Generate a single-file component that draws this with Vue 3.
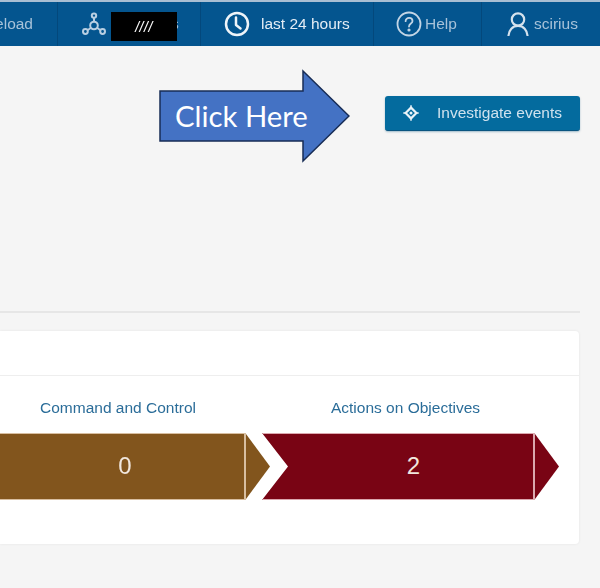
<script setup>
const bars = [
  { label: 'Command and Control', value: 0, kind: 'brown' },
  { label: 'Actions on Objectives', value: 2, kind: 'red' }
]
</script>

<template>
  <div class="page">
    <nav class="nav">
      <div class="cell c1"><span class="dim">Reload</span></div>
      <div class="cell c2">
        <svg class="ico-net" width="24" height="24" viewBox="0 0 24 24" fill="none" stroke="#b9cfe2" stroke-width="2">
          <circle cx="12" cy="3.600" r="2.200" />
          <circle cx="12" cy="13.500" r="3.800" />
          <circle cx="3.400" cy="19.500" r="2.400" />
          <circle cx="20.600" cy="19.500" r="2.400" />
          <path d="M12 5.800V9.700M9 15.800 5.500 18.200M15 15.800 18.500 18.200" />
        </svg>
        <span class="redacted">////</span><span class="dim tail">s</span>
      </div>
      <div class="cell c3">
        <svg width="26" height="26" viewBox="0 0 26 26" fill="none" stroke="#eef4f9" stroke-width="2.500">
          <circle cx="13" cy="13" r="11" />
          <path d="M12 6.500V14l4.500 3.500" stroke-linecap="round" stroke-linejoin="round" />
        </svg>
        <span class="bright">last 24 hours</span>
      </div>
      <div class="cell c4">
        <svg class="help" width="26" height="26" viewBox="0 0 26 26" fill="none" stroke="#c3d5e5" stroke-width="1.800">
          <circle cx="13" cy="13" r="11.500" />
          <path d="M9.600 10.200c0-2 1.500-3.300 3.500-3.300s3.400 1.200 3.400 3c0 2.600-3.500 2.600-3.500 5.600" stroke-linecap="round" />
          <circle cx="13" cy="19" r="0.700" fill="#c3d5e5" />
        </svg>
        <span class="dim">Help</span>
      </div>
      <div class="cell c5">
        <svg width="22" height="24" viewBox="0 0 22 24" fill="none" stroke="#d5e2ed" stroke-width="2.200">
          <circle cx="11" cy="7.500" r="6.200" />
          <path d="M1.500 23.500c.4-5.500 4-9.600 9.500-9.600s9.100 4.100 9.500 9.600" stroke-linecap="round" />
        </svg>
        <span class="dim">scirius</span>
      </div>
    </nav>

    <main class="main">
      <div class="actions">
        <button class="investigate">
          <svg width="16" height="16" viewBox="0 0 16 16" fill="none" stroke="#eaf3f8" stroke-width="2.200">
            <path d="M8 2.600 13.400 8 8 13.400 2.600 8Z" stroke-linejoin="round" />
            <circle cx="8" cy="8" r="1.500" fill="#eaf3f8" stroke="none" />
            <path d="M8 .3V2.500M8 13.500v2.200M.3 8h2.200M13.500 8h2.200" stroke-width="1.500" />
          </svg>
          <span>Investigate events</span>
        </button>
      </div>

      <hr class="rule" />

      <section class="card">
        <div class="card-head"></div>
        <div class="stages">
          <div v-for="b in bars" :key="b.label" class="stage" :class="b.kind">
            <div class="stage-label">{{ b.label }}</div>
            <div class="chevron">
              <div class="chev-body">{{ b.value }}</div>
              <div class="chev-tip"></div>
            </div>
          </div>
        </div>
      </section>
    </main>

    <div class="callout">
      <svg width="191" height="94" viewBox="0 0 191 94">
        <path d="M1 22H144V2L190 47 144 92V72H1Z" fill="#4472c4" stroke="#172c55" stroke-width="1.500" />
      </svg>
      <span class="callout-text">Click Here</span>
    </div>
  </div>
</template>

<style>
html, body { margin: 0; padding: 0; background: #f5f5f5; }
</style>

<style scoped>
.page {
  position: relative;
  width: 600px;
  height: 588px;
  overflow: hidden;
  background: #f5f5f5;
  font-family: "Liberation Sans", Arial, sans-serif;
}
.nav {
  display: flex;
  height: 44px;
  border-top: 2px solid #a9bed3;
  background: #04558f;
  filter: blur(0.4px);
}
.cell {
  display: flex;
  align-items: center;
  box-sizing: border-box;
  height: 100%;
  border-right: 1px solid #03487c;
  font-size: 15.500px;
}
.c1 { width: 58px; justify-content: flex-end; padding-right: 24px; overflow: hidden; }
.c2 { width: 143px; padding-left: 24px; }
.c3 { width: 173px; padding-left: 23px; gap: 11px; }
.c4 { width: 108px; padding-left: 22px; gap: 3px; }
.c5 { width: 118px; padding-left: 25px; gap: 5px; border-right: 0; }
.dim { color: #a7c2d9; }
.bright { color: #e4edf5; }
.ico-net { flex: none; }
.redacted {
  position: relative;
  z-index: 1;
  display: flex;
  align-items: center;
  justify-content: center;
  flex: none;
  width: 66px;
  height: 29px;
  margin: 5px 0 0 5px;
  background: #000;
  color: #fff;
  font-size: 14px;
  font-style: italic;
  letter-spacing: 0.500px;
}
.tail { margin-left: -6px; }
.main {
  padding: 50px 20px 0 0;
}
.actions {
  display: flex;
  justify-content: flex-end;
  height: 36px;
}
.investigate {
  display: flex;
  align-items: center;
  gap: 18px;
  box-sizing: border-box;
  width: 195px;
  height: 35px;
  padding: 0 0 0 18px;
  border: 0;
  border-bottom: 1px solid #0a5580;
  border-radius: 3px;
  background: #046b9e;
  box-shadow: 0 1px 2px rgba(4, 80, 120, 0.35);
  color: #cfe2ee;
  font: 15.500px "Liberation Sans", Arial, sans-serif;
  white-space: nowrap;
  filter: blur(0.3px);
}
.rule {
  height: 2px;
  margin: 179px 0 18px;
  border: 0;
  background: #e6e6e6;
}
.card {
  box-sizing: border-box;
  height: 213px;
  margin-right: 1px;
  border-radius: 0 4px 4px 0;
  background: #fff;
  box-shadow: 0 0 3px rgba(0, 0, 0, 0.07);
}
.card-head {
  height: 44px;
  border-bottom: 1px solid #eeeeee;
}
.stages {
  display: flex;
  padding-top: 23px;
  filter: blur(0.3px);
}
.stage { flex: none; }
.stage-label {
  height: 34px;
  color: #2b6d99;
  font-size: 15.500px;
  line-height: 18px;
  text-align: center;
  white-space: nowrap;
}
.brown { width: 270px; --fill: #82551d; --edge: #d8bea0; }
.brown .stage-label { padding-right: 34px; }
.red { width: 297px; margin-left: -8px; --fill: #790414; --edge: #dba8ae; }
.red .stage-label { padding-right: 10px; box-sizing: border-box; }
.chevron {
  display: flex;
  height: 68px;
}
.chev-body {
  display: flex;
  flex: 1;
  align-items: center;
  justify-content: center;
  box-sizing: border-box;
  height: 67px;
  padding-bottom: 2px;
  border-top: 1px solid var(--edge);
  border-bottom: 1px solid var(--edge);
  border-right: 2px solid var(--edge);
  background: var(--fill);
  color: #f1e7de;
  font-size: 24px;
}
.brown .chev-body { padding-left: 6px; }
.red .chev-body {
  padding-left: 32px;
  clip-path: polygon(0 0, 100% 0, 100% 100%, 0 100%, 26px 50%);
}
.chev-tip {
  flex: none;
  align-self: flex-start;
  width: 24px;
  height: 65px;
  margin-top: 1px;
  background: var(--fill);
  clip-path: polygon(0 0, 100% 50%, 0 100%);
}
.callout {
  position: absolute;
  left: 159px;
  top: 69px;
  width: 191px;
  height: 94px;
}
.callout svg { display: block; }
.callout-text {
  position: absolute;
  left: 16px;
  top: 27px;
  color: #fff;
  font-family: Lato, "Open Sans", sans-serif;
  font-size: 29.300px;
  line-height: 40px;
  white-space: nowrap;
}
</style>
